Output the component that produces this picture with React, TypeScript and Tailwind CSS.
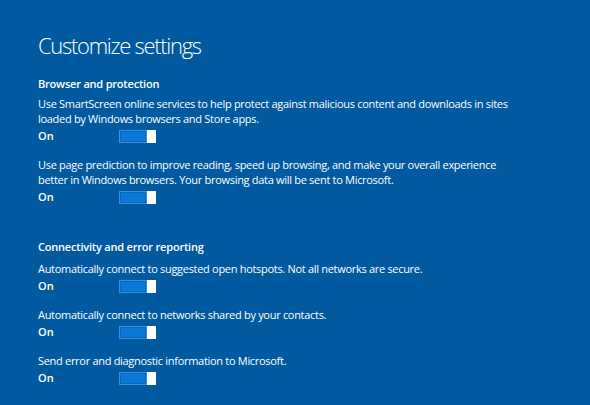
import React from "react";

function Toggle() {
  return (
    <div className="flex h-[13px] w-[37px]">
      <div className="flex-1 border border-[#3a8fe0] bg-[#0a66bd] p-px">
        <div className="h-full w-full bg-[#0a78d7]" />
      </div>
      <div className="h-full w-[9px] bg-white" />
    </div>
  );
}

function Setting({ lines }: { lines: string[] }) {
  return (
    <div className="flex flex-col">
      <div className="text-[11px] leading-[15px] tracking-[-0.3px]">
        {lines.map((l, i) => (
          <div key={i}>{l}</div>
        ))}
      </div>
      <div className="mt-[3px] flex h-[15px] items-center">
        <span className="w-[81px] text-[11px] font-semibold">On</span>
        <Toggle />
      </div>
    </div>
  );
}

export default function App() {
  return (
    <div
      className="h-[405px] w-[590px] overflow-hidden bg-[#01599f] pl-[38px] pt-[30px] text-white"
      style={{ fontFamily: '"Open Sans", "Noto Sans", sans-serif' }}
    >
      <h1 className="text-[22px] font-light leading-[30px] tracking-[-1.3px]">Customize settings</h1>
      <h2 className="mt-[16px] text-[11px] font-semibold leading-[15px] tracking-[-0.2px]">Browser and protection</h2>
      <div className="mt-[5px] flex flex-col gap-[13px]">
        <Setting
          lines={[
            "Use SmartScreen online services to help protect against malicious content and downloads in sites",
            "loaded by Windows browsers and Store apps.",
          ]}
        />
        <Setting
          lines={[
            "Use page prediction to improve reading, speed up browsing, and make your overall experience",
            "better in Windows browsers. Your browsing data will be sent to Microsoft.",
          ]}
        />
      </div>
      <h2 className="mt-[34px] text-[11px] font-semibold leading-[15px] tracking-[-0.2px]">Connectivity and error reporting</h2>
      <div className="mt-[7px] flex flex-col gap-[13px]">
        <Setting lines={["Automatically connect to suggested open hotspots. Not all networks are secure."]} />
        <Setting lines={["Automatically connect to networks shared by your contacts."]} />
        <Setting lines={["Send error and diagnostic information to Microsoft."]} />
      </div>
    </div>
  );
}
